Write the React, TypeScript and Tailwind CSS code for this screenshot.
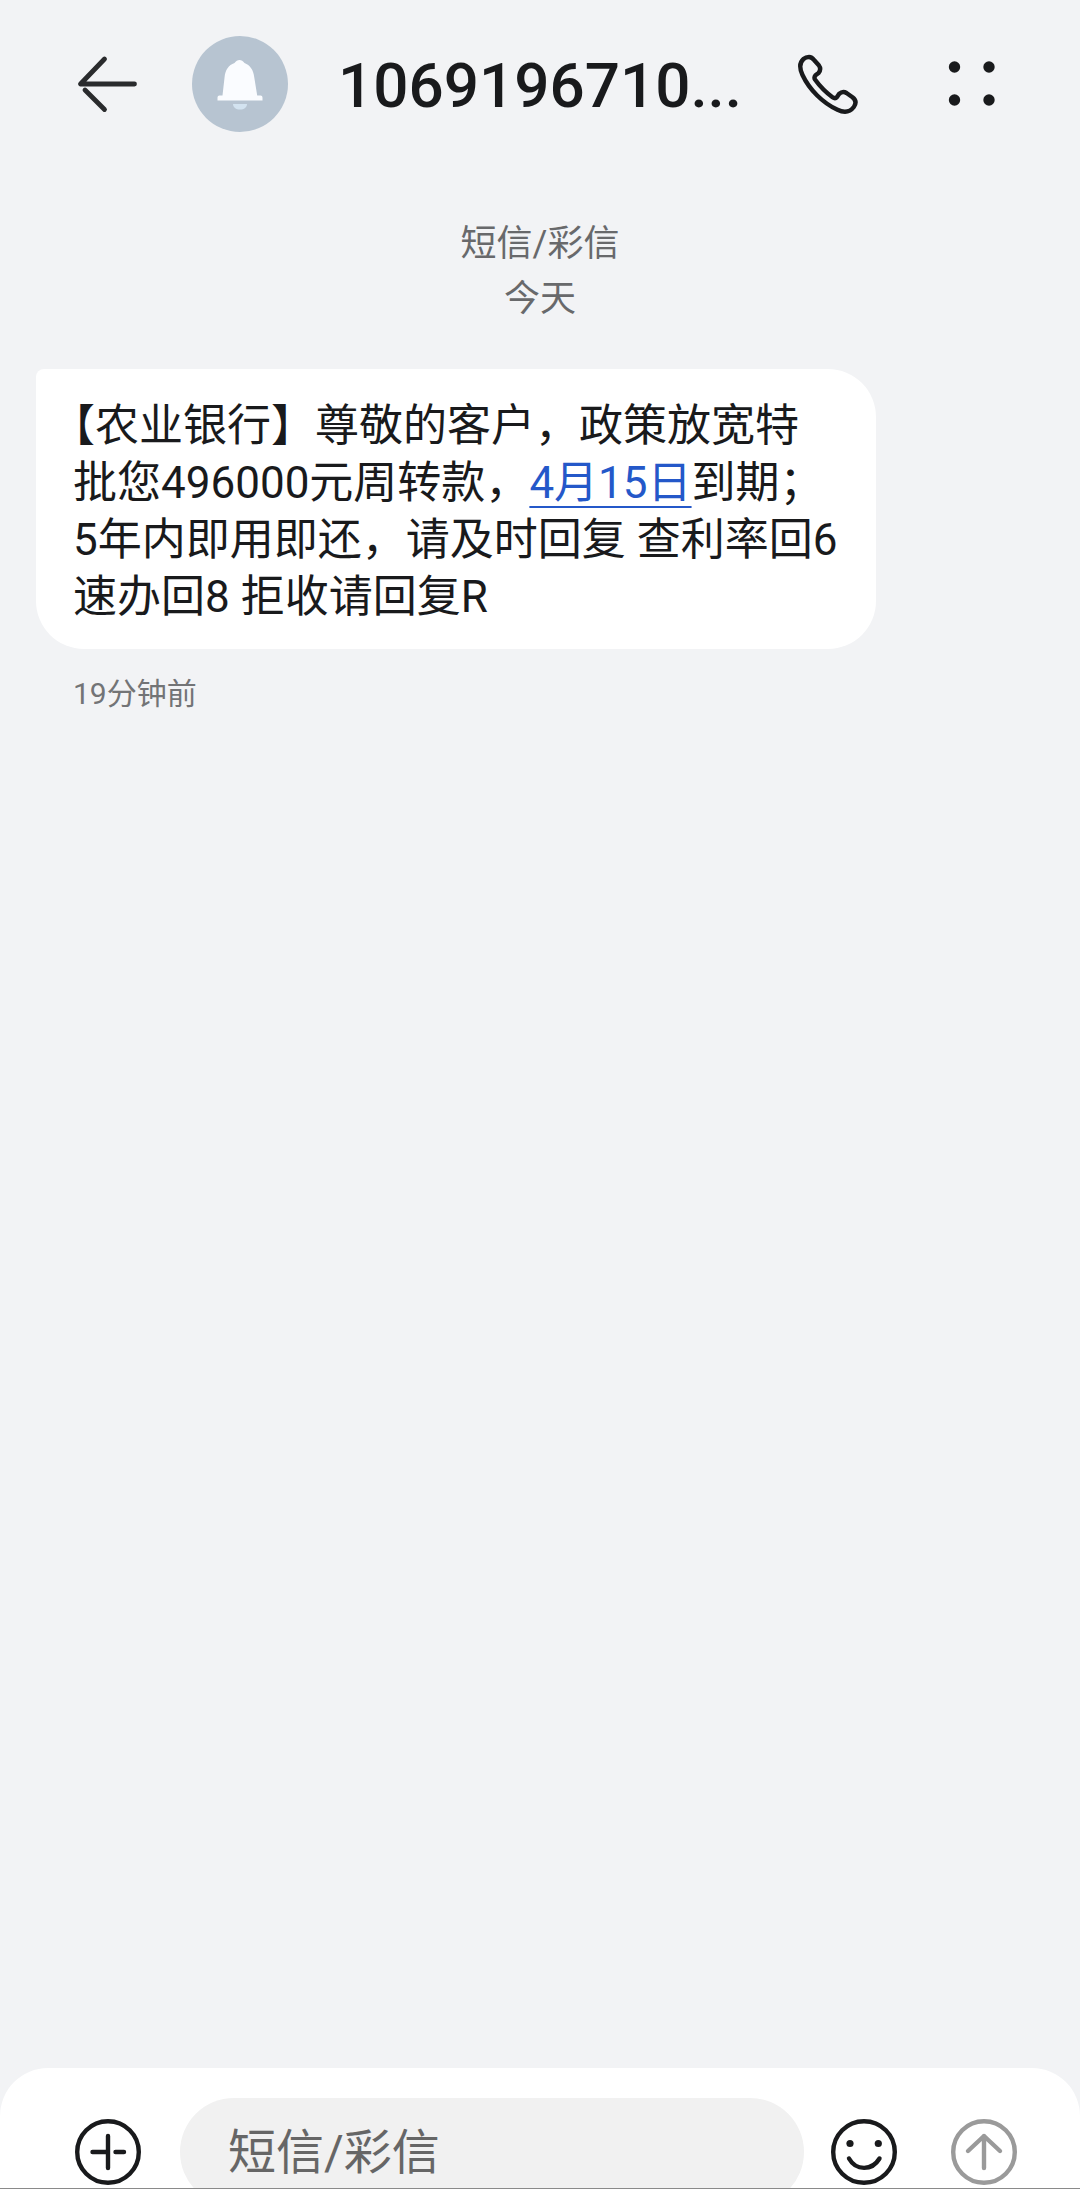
import React from 'react';

const BackIcon = () => (
  <svg viewBox="0 0 64 64" className="w-16 h-16" fill="none" stroke="#2a2b2d" strokeWidth="4.8" strokeLinecap="round" strokeLinejoin="round">
    <path d="M28.5 7 4.5 32H58.500" />
    <path d="M9 38 28.5 57.5" />
  </svg>
);

const BellIcon = () => (
  <svg viewBox="0 0 96 96" className="w-24 h-24">
    <path d="M41 68H55C55 71.500 52 73.500 48 73.500S41 71.500 41 68Z" fill="#d3e3f0" />
    <path
      d="M47.500 24C49.500 24 51 25 52.500 27C58 29 61.500 34 62.200 41L65.200 59.500H68.500C70 59.500 70.500 60.500 70.500 62V64.500H25.500V62C25.500 60.500 26 59.500 27.500 59.500H30.500L32.600 41C33.300 34 36.500 29 42.500 27C44 25 45.500 24 47.500 24Z"
      fill="#fafcff"
    />
  </svg>
);

const PhoneIcon = () => (
  <svg viewBox="0 0 64 64" className="w-16 h-16" fill="none" stroke="#191a1c" strokeWidth="4.4" strokeLinecap="round" strokeLinejoin="round">
    <path d="M13 5C15.500 5 17 6.500 18.500 8.500L22.800 13.300C24.800 16 24.600 18.500 22.500 21L19.500 23.300C18 25 18 26 19.200 27.800C24 34.500 30 40.500 36.500 45.200C38.500 46.600 39.700 46.500 41 45L43 42C45.500 39.800 48 39.500 50.500 41L56.500 45.200C60 48 60.300 51.500 57.800 55C54 60 48 61 41.500 57.800C27 51 13.500 38 6.500 23C3.500 16.500 3.500 10.500 7.500 7C9 5.700 11 5 13 5Z" />
  </svg>
);

const MenuIcon = () => (
  <svg viewBox="0 0 64 64" className="w-16 h-16" fill="#191a1c">
    <circle cx="14.500" cy="15" r="5.700" />
    <circle cx="49" cy="15" r="5.700" />
    <circle cx="14.500" cy="48" r="5.700" />
    <circle cx="49" cy="48" r="5.700" />
  </svg>
);

const PlusIcon = () => (
  <svg viewBox="0 0 66 66" className="w-[66px] h-[66px]" fill="none" stroke="#191a1c" strokeWidth="4.4" strokeLinecap="round">
    <circle cx="33" cy="33" r="30.800" />
    <path d="M33 17V49M17.500 33H31M40.500 33H49" />
  </svg>
);

const SmileIcon = () => (
  <svg viewBox="0 0 66 66" className="w-[66px] h-[66px]" fill="none" stroke="#191a1c" strokeWidth="4.4" strokeLinecap="round">
    <circle cx="33" cy="33" r="30.800" />
    <circle cx="19" cy="24.500" r="3.600" fill="#191a1c" stroke="none" />
    <circle cx="47.300" cy="24.500" r="3.600" fill="#191a1c" stroke="none" />
    <path d="M18 39.500C25 52 41 52 48.500 39.500" />
  </svg>
);

const SendIcon = () => (
  <svg viewBox="0 0 66 66" className="w-[66px] h-[66px]" fill="none" stroke="#9a9a9a" strokeWidth="4.4" strokeLinecap="round" strokeLinejoin="round">
    <circle cx="33" cy="33" r="30.800" />
    <path d="M33 49V17M17 32 33 17 49 32" />
  </svg>
);

const Header: React.FC<{ title: string }> = ({ title }) => (
  <header className="flex items-center pt-9 pl-[76px] pr-[76px]">
    <button type="button" aria-label="返回" className="shrink-0">
      <BackIcon />
    </button>
    <div className="ml-[52px] shrink-0 rounded-full bg-[#b7c4d1]">
      <BellIcon />
    </div>
    <h1 className="ml-[50px] flex-1 whitespace-nowrap pt-1 text-[62px] leading-[72px] font-medium">{title}</h1>
    <button type="button" aria-label="拨打电话" className="shrink-0">
      <PhoneIcon />
    </button>
    <button type="button" aria-label="更多" className="ml-20 shrink-0">
      <MenuIcon />
    </button>
  </header>
);

const Composer = () => (
  <form className="flex h-[121px] shrink-0 items-start overflow-hidden rounded-t-[48px] border-b border-[#8a8a8a] bg-white pt-[30px] pl-[75px] pr-[63px]">
    <button type="button" aria-label="添加" className="mt-[21px] shrink-0">
      <PlusIcon />
    </button>
    <input
      type="text"
      aria-label="短信/彩信"
      placeholder="短信/彩信"
      className="ml-[39px] h-[108px] min-w-0 flex-1 rounded-full bg-[#f1f1f1] px-12 text-[48px] outline-none placeholder:text-[#666666]"
    />
    <button type="button" aria-label="表情" className="mt-[21px] ml-[27px] shrink-0">
      <SmileIcon />
    </button>
    <button type="button" aria-label="发送" className="mt-[21px] ml-[54px] shrink-0">
      <SendIcon />
    </button>
  </form>
);

const App: React.FC = () => {
  return (
    <div className="flex h-screen flex-col overflow-hidden bg-[#f2f3f5] font-['Roboto','Noto_Sans_CJK_SC',sans-serif] text-[#191a1c]" lang="zh-CN">
      <Header title="1069196710..." />

      <main className="flex-1 px-9 pt-[85px]">
        <div className="text-center text-[36px] leading-[55px] text-[#68696b]">
          <p>短信/彩信</p>
          <p>今天</p>
        </div>

        <div className="mt-[42px] w-5/6 rounded-[48px] rounded-tl-lg bg-white pt-[29px] pb-[23px] pl-[37px] pr-[34px]">
          <p className="text-[44px] leading-[57px] [text-spacing-trim:trim-start]">
            【农业银行】尊敬的客户，政策放宽特批您496000元周转款，
            <a href="#date" className="text-[#2458c9] underline decoration-2 underline-offset-8">
              4月15日
            </a>
            到期；5年内即用即还，请及时回复 查利率回6 速办回8 拒收请回复R
          </p>
        </div>
        <time className="mt-[23px] ml-[37px] block text-[30px] leading-[44px] text-[#737476]">19分钟前</time>
      </main>

      <Composer />
    </div>
  );
};

export default App;
